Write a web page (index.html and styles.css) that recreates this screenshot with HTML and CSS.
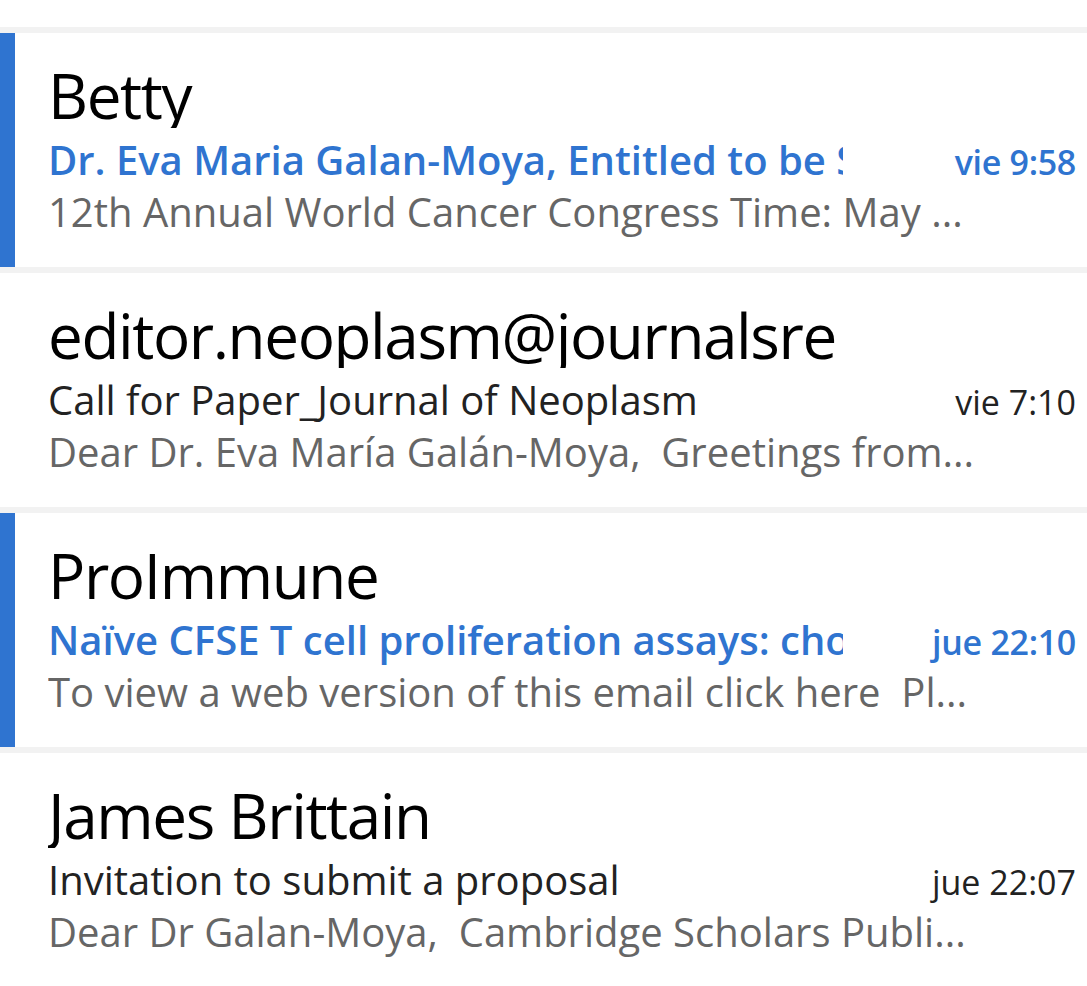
FILE: index.html
```html
<!DOCTYPE html>
<html lang="es">
<head>
<meta charset="utf-8">
<title>Correo</title>
<link rel="stylesheet" href="styles.css">
</head>
<body>
<div class="list">
  <div class="sep"></div>
  <div class="item unread">
    <div class="name">Betty</div>
    <div class="row">
      <div class="subject">Dr. Eva Maria Galan-Moya, Entitled to be Speaker at the 12th Annual World Cancer Congress</div>
      <div class="time">vie 9:58</div>
    </div>
    <div class="preview">12th Annual World Cancer Congress Time: May ...</div>
  </div>
  <div class="sep"></div>
  <div class="item">
    <div class="name">editor.neoplasm@journalsre</div>
    <div class="row">
      <div class="subject">Call for Paper_Journal of Neoplasm</div>
      <div class="time">vie 7:10</div>
    </div>
    <div class="preview">Dear Dr. Eva María Galán-Moya,&nbsp; Greetings from...</div>
  </div>
  <div class="sep"></div>
  <div class="item unread">
    <div class="name">ProImmune</div>
    <div class="row">
      <div class="subject">Naïve CFSE T cell proliferation assays: choose the right approach</div>
      <div class="time">jue 22:10</div>
    </div>
    <div class="preview">To view a web version of this email click here&nbsp; Pl...</div>
  </div>
  <div class="sep"></div>
  <div class="item">
    <div class="name">James Brittain</div>
    <div class="row">
      <div class="subject">Invitation to submit a proposal</div>
      <div class="time">jue 22:07</div>
    </div>
    <div class="preview">Dear Dr Galan-Moya,&nbsp; Cambridge Scholars Publi...</div>
  </div>
</div>
</body>
</html>
```

FILE: styles.css
```css
html, body {
  margin: 0;
  padding: 0;
  background: #ffffff;
}
body {
  font-family: "Open Sans", "Noto Sans", "Liberation Sans", sans-serif;
  overflow: hidden;
}
.list {
  padding-top: 27px;
  display: flex;
  flex-direction: column;
}
.sep {
  height: 6px;
  background: #f2f2f2;
}
.item {
  height: 234px;
  box-sizing: border-box;
  padding: 29px 11px 0 48px;
  overflow: hidden;
}
.item.unread {
  border-left: 15px solid #2f74d0;
  padding-left: 33px;
}
.name {
  font-size: 62px;
  line-height: 66px;
  letter-spacing: -1.4px;
  color: #000;
  white-space: nowrap;
  overflow: hidden;
  margin-bottom: 7px;
  width: 800px;
}
.row {
  display: flex;
  align-items: baseline;
  line-height: 50px;
}
.subject {
  font-size: 40px;
  color: #222;
  white-space: nowrap;
  overflow: hidden;
  width: 795px;
  flex: none;
}
.time {
  flex: 1;
  text-align: right;
  font-size: 34px;
  color: #222;
  white-space: nowrap;
}
.unread .subject,
.unread .time {
  color: #2f74d0;
  font-weight: 600;
}
.unread .time {
  letter-spacing: -0.3px;
}
.preview {
  font-size: 40px;
  line-height: 50px;
  color: #666;
  white-space: nowrap;
  overflow: hidden;
  text-overflow: ellipsis;
  width: 950px;
}
```
